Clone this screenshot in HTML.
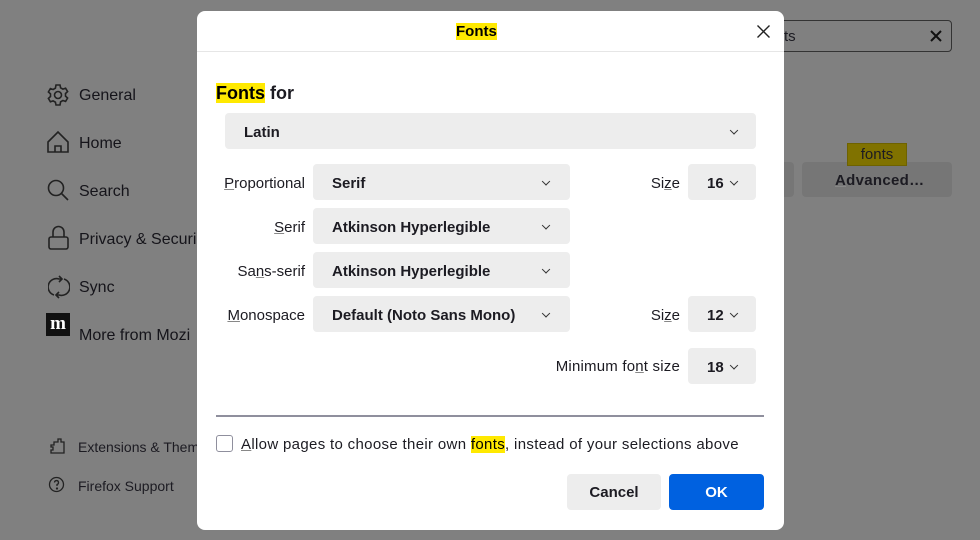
<!DOCTYPE html>
<html><head><style>
*{margin:0;padding:0;box-sizing:border-box}
body{width:980px;height:540px;background:#808080;font-family:"Liberation Sans","DejaVu Sans",sans-serif;color:#1c1b22;position:relative;overflow:hidden}
.a{position:absolute;white-space:nowrap}
.side{font-size:16px;color:#15141a}
.dlg{position:absolute;left:197px;top:11px;width:587px;height:519px;background:#fff;border-radius:8px}
.sel{position:absolute;background:#ededed;border-radius:4px;font-weight:bold;font-size:15px;color:#1c1b22}
.sel span{position:absolute;left:19px;top:50%;transform:translateY(-42%)}
.chev{position:absolute;top:50%;width:6px;height:6px;border-right:1.3px solid #333;border-bottom:1.3px solid #333;transform:translateY(-60%) rotate(45deg)}
.lbl{position:absolute;font-size:15px;text-align:right;white-space:nowrap}
u{text-decoration:underline;text-decoration-color:#888}
mark{background:#ffe900;color:#000}
</style></head><body>
<svg class="a" style="left:46px;top:83px" width="24" height="24" viewBox="0 0 24 24" fill="none" stroke="#222" stroke-width="1.6"><circle cx="12" cy="12" r="3.5"/><path d="M10 2h4l.6 2.8 2.3 1.3 2.7-.9 2 3.4-2.1 1.9v2.6l2.1 1.9-2 3.4-2.7-.9-2.3 1.3L14 22h-4l-.6-2.8-2.3-1.3-2.7.9-2-3.4 2.1-1.9v-2.6L2.4 9l2-3.4 2.7.9 2.3-1.3z"/></svg>
<div class="a side" style="left:79px;top:87px">General</div>
<svg class="a" style="left:46px;top:130px" width="24" height="24" viewBox="0 0 24 24" fill="none" stroke="#222" stroke-width="1.6"><path d="M2 12L12 2l10 10v10H2z M9 22v-6h6v6"/></svg>
<div class="a side" style="left:79px;top:135px">Home</div>
<svg class="a" style="left:46px;top:178px" width="24" height="24" viewBox="0 0 24 24" fill="none" stroke="#222" stroke-width="1.6"><circle cx="10" cy="10" r="7.5"/><path d="M15.5 15.5L22 22"/></svg>
<div class="a side" style="left:79px;top:183px">Search</div>
<svg class="a" style="left:48px;top:225px" width="22" height="26" viewBox="0 0 22 26" fill="none" stroke="#222" stroke-width="1.6"><rect x="1" y="12" width="19" height="12" rx="2"/><path d="M5 12V7a5.5 5.5 0 0 1 11 0v5"/></svg>
<div class="a side" style="left:79px;top:231px">Privacy &amp; Securi</div>
<svg class="a" style="left:48px;top:275px" width="22" height="24" viewBox="0 0 22 24" fill="none" stroke="#222" stroke-width="1.6"><path d="M6 20A8 8 0 0 1 11 4h3M16 4a8 8 0 0 1-5 16H8"/><path d="M11 1l3 3-3 3M11 17l-3 3 3 3"/></svg>
<div class="a side" style="left:79px;top:279px">Sync</div>
<div class="a" style="left:46px;top:313px;width:24px;height:23px;background:#111;color:#fff;font:bold 19px 'Liberation Serif',serif;text-align:center;line-height:21px">m</div>
<div class="a side" style="left:79px;top:327px">More from Mozi</div>
<svg class="a" style="left:49px;top:437px" width="18" height="18" viewBox="0 0 18 18" fill="none" stroke="#222" stroke-width="1.3"><path d="M2 8h3V5h4V2h3v3h3v11H2v-3h2v-3H2z"/></svg>
<div class="a" style="left:78px;top:439px;font-size:14px">Extensions &amp; Them</div>
<svg class="a" style="left:48px;top:476px" width="17" height="17" viewBox="0 0 17 17" fill="none" stroke="#222" stroke-width="1.3"><circle cx="8.5" cy="8.5" r="7"/><path d="M6.5 6.5a2 2 0 1 1 2.5 2v1.5"/><circle cx="9" cy="12.5" r=".5" fill="#222"/></svg>
<div class="a" style="left:78px;top:478px;font-size:14px">Firefox Support</div>
<div class="a" style="left:770px;top:20px;width:182px;height:32px;border:1px solid #333;border-radius:4px"></div>
<div class="a" style="left:784px;top:28px;font-size:15px">ts</div>
<svg class="a" style="left:930px;top:30px" width="12" height="12" viewBox="0 0 12 12" stroke="#111" stroke-width="2"><path d="M1 1l10 10M11 1L1 11"/></svg>
<div class="a" style="left:770px;top:162px;width:24px;height:35px;background:#767676;border-radius:4px"></div>
<div class="a" style="left:802px;top:162px;width:150px;height:35px;background:#767676;border-radius:4px"></div>
<div class="a" style="left:835px;top:172px;font-size:15px;font-weight:bold;letter-spacing:0.3px"><u>A</u>dvanced…</div>
<div class="a" style="left:847px;top:143px;width:60px;height:23px;background:#807200;border:1px solid #6e6200;font-size:15px;text-align:center;line-height:22px">fonts</div>
<div class="dlg">
 <div class="a" style="left:0;top:0;width:587px;height:41px;border-bottom:1px solid #e6e6e6"></div>
 <div class="a" style="left:259px;top:12px;font-size:15px;font-weight:bold"><mark>Fonts</mark></div>
 <svg class="a" style="left:560px;top:14px" width="13" height="13" viewBox="0 0 13 13" stroke="#222" stroke-width="1.4"><path d="M.5.5l12 12M12.5.5l-12 12"/></svg>
 <div class="a" style="left:19px;top:72px;font-size:18px;font-weight:bold"><mark>Fonts</mark> for</div>
 <div class="sel" style="left:28px;top:102px;width:531px;height:36px"><span>Latin</span><i class="chev" style="left:506px"></i></div>
 <div class="lbl" style="left:0;width:108px;top:164px"><u>P</u>roportional</div>
 <div class="sel" style="left:116px;top:153px;width:257px;height:36px"><span>Serif</span><i class="chev" style="left:230px"></i></div>
 <div class="lbl" style="left:0;width:108px;top:208px"><u>S</u>erif</div>
 <div class="sel" style="left:116px;top:197px;width:257px;height:36px"><span>Atkinson Hyperlegible</span><i class="chev" style="left:230px"></i></div>
 <div class="lbl" style="left:0;width:108px;top:252px">Sa<u>n</u>s-serif</div>
 <div class="sel" style="left:116px;top:241px;width:257px;height:36px"><span>Atkinson Hyperlegible</span><i class="chev" style="left:230px"></i></div>
 <div class="lbl" style="left:0;width:108px;top:296px"><u>M</u>onospace</div>
 <div class="sel" style="left:116px;top:285px;width:257px;height:36px"><span>Default (Noto Sans Mono)</span><i class="chev" style="left:230px"></i></div>
 <div class="lbl" style="left:400px;width:83px;top:164px">Si<u>z</u>e</div>
 <div class="sel" style="left:491px;top:153px;width:68px;height:36px"><span>16</span><i class="chev" style="left:43px"></i></div>
 <div class="lbl" style="left:400px;width:83px;top:296px">Si<u>z</u>e</div>
 <div class="sel" style="left:491px;top:285px;width:68px;height:36px"><span>12</span><i class="chev" style="left:43px"></i></div>
 <div class="lbl" style="left:300px;width:183px;top:347px;letter-spacing:0.2px">Minimum fo<u>n</u>t size</div>
 <div class="sel" style="left:491px;top:337px;width:68px;height:36px"><span>18</span><i class="chev" style="left:43px"></i></div>
 <div class="a" style="left:19px;top:404px;width:548px;height:2px;background:#8f8f9d"></div>
 <div class="a" style="left:19px;top:424px;width:17px;height:17px;border:1px solid #8f8f9d;border-radius:3px"></div>
 <div class="a" style="left:44px;top:425px;font-size:15px;letter-spacing:0.33px"><u>A</u>llow pages to choose their own <mark>fonts</mark>, instead of your selections above</div>
 <div class="a" style="left:370px;top:463px;width:94px;height:36px;background:#ededed;border-radius:4px;font-size:15px;font-weight:bold;text-align:center;line-height:38px">Cancel</div>
 <div class="a" style="left:472px;top:463px;width:95px;height:36px;background:#0061e0;color:#fff;border-radius:4px;font-size:15px;font-weight:bold;text-align:center;line-height:38px">OK</div>
</div>
</body></html>
